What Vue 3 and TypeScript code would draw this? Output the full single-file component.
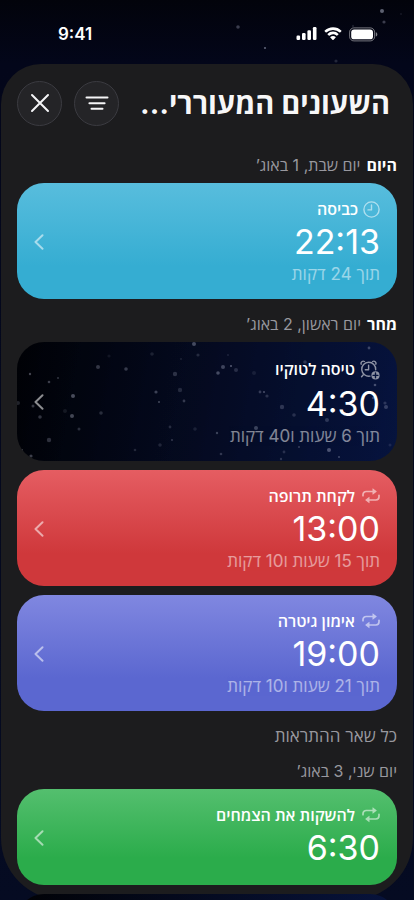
<script setup lang="ts">
type IconName = 'clock' | 'alarm' | 'repeat'
type Tone = 'blue' | 'night' | 'red' | 'violet' | 'green'

interface Alarm {
  title: string
  time: string
  remaining?: string
  icon: IconName
  tone: Tone
}

interface Section {
  overline?: string
  day?: string
  date: string
  alarms: Alarm[]
}

type Star = [x: number, y: number, radius: number, opacity: number]

const sections: Section[] = [
  {
    day: 'היום',
    date: 'יום שבת, 1 באוג’',
    alarms: [{ title: 'כביסה', time: '22:13', remaining: 'תוך 24 דקות', icon: 'clock', tone: 'blue' }],
  },
  {
    day: 'מחר',
    date: 'יום ראשון, 2 באוג’',
    alarms: [
      { title: 'טיסה לטוקיו', time: '4:30', remaining: 'תוך 6 שעות ו40 דקות', icon: 'alarm', tone: 'night' },
      { title: 'לקחת תרופה', time: '13:00', remaining: 'תוך 15 שעות ו10 דקות', icon: 'repeat', tone: 'red' },
      { title: 'אימון גיטרה', time: '19:00', remaining: 'תוך 21 שעות ו10 דקות', icon: 'repeat', tone: 'violet' },
    ],
  },
  {
    overline: 'כל שאר ההתראות',
    date: 'יום שני, 3 באוג’',
    alarms: [{ title: 'להשקות את הצמחים', time: '6:30', icon: 'repeat', tone: 'green' }],
  },
]

const cardStars: Star[] = [
  [177, 2, 2, 0.4], [135, 12, 1.8, 0.16], [181, 13, 1.6, 0.2], [92, 14, 1.6, 0.1], [164, 17, 1, 0.16],
  [81, 25, 2, 0.3], [109, 27, 1.8, 0.32], [158, 32, 2.2, 0.26], [201, 31, 1.8, 0.4], [206, 25, 2, 0.36],
  [214, 24, 1, 0.5], [219, 28, 2, 0.22], [237, 31, 2, 0.12], [13, 32, 1.2, 0.4], [41, 36, 1, 0.3],
  [32, 40, 1.3, 0.36], [139, 50, 1.6, 0.36], [163, 48, 2.2, 0.2], [56, 54, 2, 0.44], [142, 60, 1, 0.4],
  [167, 59, 1.4, 0.3], [1, 61, 2, 0.2], [16, 64, 1.5, 0.34], [48, 69, 2, 0.12], [23, 75, 1.8, 0.3],
  [55, 74, 2, 0.4], [84, 71, 1.8, 0.24], [62, 87, 1.5, 0.25], [153, 85, 1.4, 0.22], [178, 87, 1.8, 0.14],
  [200, 91, 1.2, 0.34], [239, 86, 2, 0.34], [32, 98, 2.2, 0.28], [155, 98, 1, 0.3], [143, 103, 1.8, 0.18],
  [118, 108, 1.3, 0.2], [5, 108, 1, 0.4], [14, 114, 1.6, 0.36], [204, 112, 1.3, 0.28], [243, 50, 1.4, 0.3],
  [247, 50, 1.1, 0.4], [250, 54, 1.6, 0.24], [265, 65, 2.2, 0.26], [277, 73, 1.8, 0.22], [288, 20, 1.8, 0.25],
  [310, 78, 2, 0.25], [267, 110, 1.4, 0.22], [264, 117, 1.2, 0.25], [282, 105, 1, 0.3], [312, 108, 2, 0.44],
  [322, 115, 1.1, 0.34], [352, 6, 1.4, 0.34], [377, 11, 1.4, 0.4], [358, 43, 1.3, 0.4], [368, 61, 1.6, 0.24],
  [369, 65, 2, 0.3], [378, 107, 1.2, 0.34], [373, 103, 1.5, 0.14], [356, 56, 1.2, 0.3], [211, 13, 1, 0.15],
]

const skyStars: Star[] = [
  [382, 11, 2, 0.45], [384, 22, 1.6, 0.28], [238, 27, 1.8, 0.28], [265, 48, 1.1, 0.45], [336, 61, 1.6, 0.16],
  [353, 26, 1.2, 0.12], [401, 14, 1, 0.1],
]
</script>

<template>
  <div class="screen">
    <svg class="backdrop" viewBox="0 0 414 64" preserveAspectRatio="xMidYMin slice" aria-hidden="true">
      <circle v-for="([x, y, r, o], i) in skyStars" :key="i" :cx="x" :cy="y" :r="r" :opacity="o" fill="#cdd2e8" />
    </svg>

    <div class="status" dir="ltr">
      <time class="status-time">9:41</time>
      <div class="status-icons">
        <svg width="21" height="14" viewBox="0 0 21 14" aria-hidden="true">
          <rect x="0.5" y="8.5" width="3.6" height="4.5" rx="1.2" />
          <rect x="6" y="6" width="3.6" height="7" rx="1.2" />
          <rect x="11.4" y="3.2" width="3.6" height="9.8" rx="1.2" />
          <rect x="16.9" y="0" width="3.6" height="13" rx="1.2" />
        </svg>
        <svg width="18" height="14" viewBox="0 0 18 14" aria-hidden="true">
          <path d="M9 .3C5.8 .3 2.7 1.5 .5 3.7l-.1.4 1.5 1.500.4 0A9.600 9.600 0 0 1 9 2.900a9.600 9.600 0 0 1 6.700 2.700l.4 0 1.500-1.500-.1-.4A12.200 12.200 0 0 0 9 .3z" />
          <path d="M9 4.600a8 8 0 0 0-5.600 2.300l0 .4 1.600 1.500.4 0A5.300 5.300 0 0 1 9 7.300c1.400 0 2.700.5 3.600 1.500l.4 0 1.600-1.500 0-.4A8 8 0 0 0 9 4.600z" />
          <path d="M9 9c-1 0-2 .4-2.700 1l0 .5 2.400 2.400.6 0 2.400-2.400 0-.5A4 4 0 0 0 9 9z" />
        </svg>
        <svg width="29" height="15" viewBox="0 0 29 15" aria-hidden="true">
          <rect x="0.6" y="0.9" width="25" height="13" rx="4.3" fill="none" stroke="#fff" stroke-opacity=".45" />
          <rect x="2.2" y="2.5" width="21.8" height="9.8" rx="2.9" />
          <path d="M26.800 5.300c1 .4 1.500 1.200 1.500 2.100s-.5 1.700-1.500 2.100z" opacity=".5" />
        </svg>
      </div>
    </div>

    <main class="sheet" dir="rtl">
      <header class="header">
        <h1 class="title">השעונים המעוררי…</h1>
        <div class="actions">
          <button class="round" type="button" aria-label="סינון">
            <svg width="24" height="24" viewBox="0 0 24 24" aria-hidden="true">
              <path d="M1.500 6.500h21M4.400 12.200h15.200M6.500 17.800h11" />
            </svg>
          </button>
          <button class="round" type="button" aria-label="סגירה">
            <svg width="24" height="24" viewBox="0 0 24 24" aria-hidden="true">
              <path d="M4 4l16 16M20 4L4 20" />
            </svg>
          </button>
        </div>
      </header>

      <section v-for="section in sections" :key="section.date">
        <h2 v-if="section.overline" class="overline">{{ section.overline }}</h2>
        <h3 class="label">
          <strong v-if="section.day">{{ section.day }}</strong>
          <span>{{ section.date }}</span>
        </h3>
        <ul class="list">
          <li v-for="alarm in section.alarms" :key="alarm.time">
            <button class="card" :class="alarm.tone" type="button">
              <svg
                v-if="alarm.tone === 'night'"
                class="stars"
                viewBox="0 0 380 119"
                preserveAspectRatio="xMidYMid slice"
                aria-hidden="true"
              >
                <circle v-for="([x, y, r, o], i) in cardStars" :key="i" :cx="x" :cy="y" :r="r" :opacity="o" fill="#cdd2e8" />
              </svg>
              <span class="body">
                <span class="name" :class="alarm.icon">
                  <svg v-if="alarm.icon === 'clock'" width="17" height="17" viewBox="0 0 17 17" aria-hidden="true">
                    <circle cx="8.5" cy="8.5" r="7.6" />
                    <path d="M8.500 4v4.900H5" />
                  </svg>
                  <svg v-else-if="alarm.icon === 'alarm'" width="20" height="20" viewBox="0 0 20 20" aria-hidden="true">
                    <path d="M10 16.100A7 7 0 1 1 15.700 9.800" />
                    <path d="M8.600 5.300v4.400H5.300M1.200 4.200A2.200 2.200 0 0 1 4.400 1.500M15.800 4.200A2.200 2.200 0 0 0 12.600 1.500M3.300 14.700l-1.700 2" />
                    <circle class="solid" cx="15.5" cy="15.4" r="4.1" />
                    <path class="plus" d="M15.500 13v4.800M13.100 15.400h4.800" />
                  </svg>
                  <svg v-else width="18" height="16" viewBox="0 0 18 16" aria-hidden="true">
                    <path d="M1 7.700V6.700A3.200 3.200 0 0 1 4.200 3.500H11M17 7.300V8.800a3.200 3.200 0 0 1-3.200 3.200H7" />
                    <path class="solid" d="M10.500.7v5.600q0 .6.500.2l3.600-2.700q.4-.3 0-.6L11 .5q-.5-.4-.5.2zM7.500 9.200v5.600q0 .6-.5.200L3.400 12.300q-.4-.3 0-.6L7 9q.5-.4.5.200z" />
                  </svg>
                  <span>{{ alarm.title }}</span>
                </span>
                <time class="time" dir="ltr">{{ alarm.time }}</time>
                <span v-if="alarm.remaining" class="remaining">{{ alarm.remaining }}</span>
              </span>
              <svg class="chevron" width="10" height="16" viewBox="0 0 10 16" aria-hidden="true">
                <path d="M8.500 1.200L1.500 8l7 6.800" />
              </svg>
            </button>
          </li>
        </ul>
      </section>
      <div class="card night next"></div>
    </main>
  </div>
</template>

<style>
body {
  background: #03050f;
}
</style>

<style scoped>
.screen {
  position: relative;
  display: flex;
  flex-direction: column;
  height: 100vh;
  overflow: hidden;
  background: linear-gradient(#02030b, #03061a 64px, #050b22);
  color: #fff;
  font-family: Inter, 'Open Sans', 'Noto Sans', sans-serif;
}

.backdrop {
  position: absolute;
  inset: 0 0 auto;
  width: 100%;
}

.status {
  position: relative;
  display: flex;
  flex: none;
  align-items: center;
  justify-content: space-between;
  height: 60px;
  padding: 4px 36px 0 58px;
}

.status-time {
  font-size: 17px;
  font-weight: 600;
  line-height: 22px;
}

.status-icons {
  display: flex;
  align-items: center;
  gap: 7px;
  fill: #fff;
}

.sheet {
  position: relative;
  flex: 1 1 0;
  min-height: 0;
  margin: 0 1px;
  padding: 16px 16px 0;
  background: #1c1c1e;
  border-radius: 40px 40px 62px 62px;
}

.header {
  display: flex;
  align-items: center;
  justify-content: space-between;
  min-height: 46px;
  margin-bottom: 14px;
  padding-right: 7px;
}

.title {
  margin: 0;
  padding-top: 2px;
  color: #f7f7f8;
  font-size: 29px;
  font-weight: 700;
  line-height: 36px;
  white-space: nowrap;
}

.actions {
  display: flex;
  gap: 12px;
}

.round {
  display: grid;
  place-items: center;
  width: 45px;
  height: 45px;
  padding: 0;
  background: #242427;
  border: 1px solid #3b3b41;
  border-radius: 50%;
}

.round svg {
  fill: none;
  stroke: #f5f5f7;
  stroke-width: 2;
  stroke-linecap: round;
}

.overline,
.label {
  margin: 0;
  padding-top: 15px;
  color: #98989f;
  font-size: 16px;
  font-weight: 400;
  line-height: 20px;
}

.label {
  display: flex;
  gap: 6px;
  padding-bottom: 8px;
}

.overline {
  font-size: 17px;
}

.label strong {
  color: #fff;
  font-weight: 700;
}

.list {
  display: grid;
  gap: 9px;
  margin: 0;
  padding: 0;
  list-style: none;
}

.card {
  position: relative;
  display: flex;
  align-items: center;
  justify-content: space-between;
  width: 100%;
  padding: 16px 17px 15px;
  overflow: hidden;
  border: 0;
  border-radius: 27px;
  color: #fff;
  font: inherit;
  text-align: start;
}

.blue {
  background: linear-gradient(#58bddd, #35add2 72%);
}

.red {
  background: linear-gradient(#e55d62, #cf383b 72%);
}

.violet {
  background: linear-gradient(#8087e0, #5b67d0 72%);
}

.green {
  background: linear-gradient(#54bf6e, #2bac4b 72%);
}

.night {
  background: linear-gradient(100deg, #010206, #050b22 50%, #07143f);
}

.next {
  height: 119px;
  margin-top: 9px;
  padding: 0;
}

.stars {
  position: absolute;
  inset: 0;
  width: 100%;
  height: 100%;
  opacity: 0.8;
}

.body {
  position: relative;
  display: flex;
  flex-direction: column;
}

.name {
  display: flex;
  align-items: center;
  gap: 5px;
  font-size: 16px;
  font-weight: 600;
  line-height: 20px;
}

.name.alarm {
  line-height: 23px;
}

.name svg {
  flex: none;
  fill: none;
  stroke: currentColor;
  stroke-width: 1.4;
  stroke-linecap: round;
  stroke-linejoin: round;
  opacity: 0.55;
}

.name.repeat svg {
  margin-left: 2px;
  stroke-width: 1.7;
}

.name .solid {
  fill: currentColor;
  stroke: none;
}

.name .plus {
  stroke: #07143f;
}

.time {
  font-size: 34px;
  font-weight: 400;
  line-height: 45px;
  text-align: right;
}

.remaining {
  font-size: 17px;
  font-weight: 400;
  line-height: 20px;
  opacity: 0.5;
}

.chevron {
  position: relative;
  fill: none;
  stroke: #fff;
  stroke-width: 2;
  stroke-linecap: round;
  stroke-linejoin: round;
  opacity: 0.55;
}
</style>
